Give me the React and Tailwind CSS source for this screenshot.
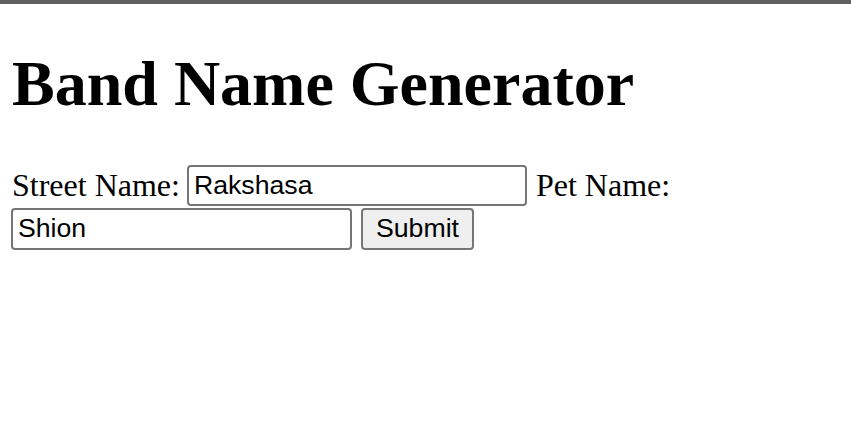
import { useState } from "react";

export default function App() {
  const [street, setStreet] = useState("Rakshasa");
  const [pet, setPet] = useState("Shion");

  return (
    <div className="min-h-screen bg-white text-black">
      {/* top frame border */}
      <div className="h-[4px] bg-[#616161]"></div>

      <div className="pl-[12px] font-['Liberation_Serif',serif]">
        <h1 className="mt-[43px] mb-[43px] text-[64px] font-bold leading-[1.15]">
          Band Name Generator
        </h1>

        <form
          onSubmit={(e) => e.preventDefault()}
          className="flex flex-wrap items-center gap-x-[8px] gap-y-[2px] pt-[1px] text-[32px] leading-[1.15]"
        >
          <label htmlFor="street" className="-mr-[1px]">
            Street Name:
          </label>
          <input
            id="street"
            type="text"
            value={street}
            onChange={(e) => setStreet(e.target.value)}
            className="h-[41px] w-[340px] rounded-[4px] border-2 border-[#767676] bg-white px-[5px] font-['Liberation_Sans',sans-serif] text-[26.67px] leading-none outline-none"
          />
          <label htmlFor="pet" className="ml-[1px]">
            Pet Name:
          </label>
          <input
            id="pet"
            type="text"
            value={pet}
            onChange={(e) => setPet(e.target.value)}
            className="h-[42px] w-[341px] -ml-[1px] rounded-[4px] border-2 border-[#767676] bg-white px-[5px] font-['Liberation_Sans',sans-serif] text-[26.67px] leading-none outline-none"
          />
          <input
            type="submit"
            value="Submit"
            className="ml-[1px] h-[42px] w-[113px] rounded-[4px] border-2 border-[#767676] bg-[#efefef] px-[12px] font-['Liberation_Sans',sans-serif] text-[26.67px] leading-none text-black cursor-pointer"
          />
        </form>
      </div>
    </div>
  );
}
